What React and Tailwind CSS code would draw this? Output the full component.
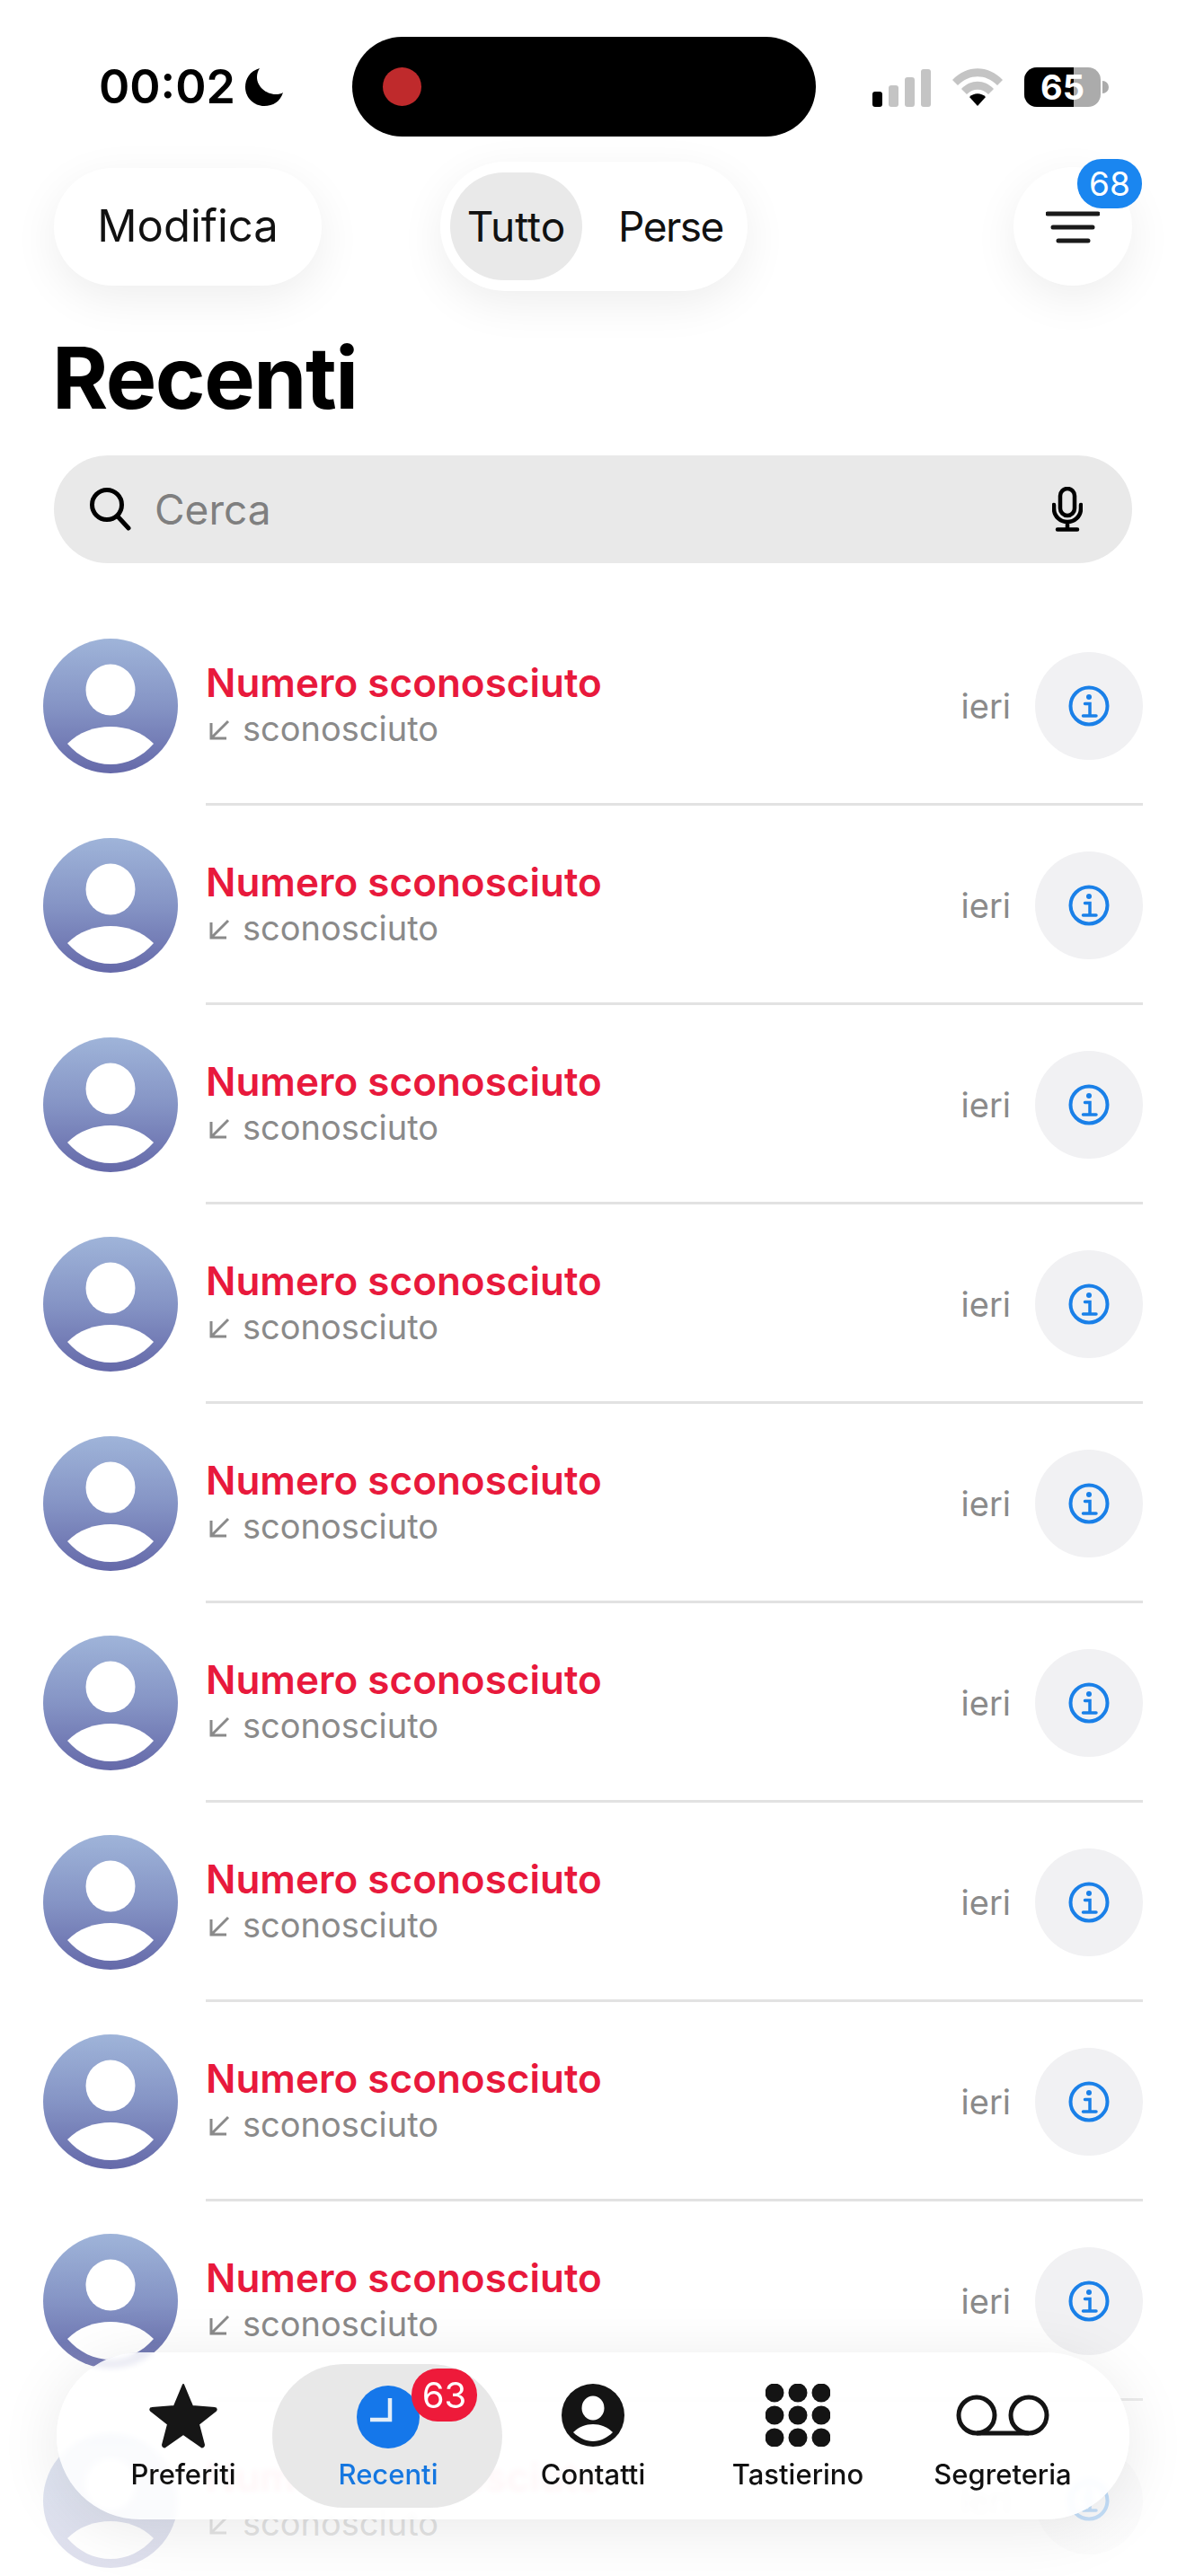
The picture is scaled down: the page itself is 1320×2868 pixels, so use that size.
import React from "react";

const ROWS = Array.from({ length: 10 }, (_, i) => i);

function Avatar({ id }) {
  return (
    <svg width="150" height="150" viewBox="0 0 150 150" className="shrink-0">
      <defs>
        <linearGradient id={`av${id}`} x1="0" y1="0" x2="0" y2="1">
          <stop offset="0" stopColor="#9fb4d9" />
          <stop offset="0.5" stopColor="#8594c5" />
          <stop offset="1" stopColor="#6569a9" />
        </linearGradient>
      </defs>
      <circle cx="75" cy="75" r="75" fill={`url(#av${id})`} />
      <ellipse cx="75" cy="57" rx="27.5" ry="28.5" fill="#ffffff" />
      <path d="M27 117 C40 104 57 98 75 98 C93 98 110 104 123 117 C110 132 93 140 75 140 C57 140 40 132 27 117 Z" fill="#ffffff" />
    </svg>
  );
}

function InfoIcon() {
  return (
    <svg width="48" height="48" viewBox="0 0 48 48" fill="none" stroke="#1a80e8">
      <circle cx="24" cy="24" r="20.5" strokeWidth="4" />
      <circle cx="24" cy="14" r="3" fill="#1a80e8" stroke="none" />
      <path d="M19.5 21.5H25V35M17.5 35H32" strokeWidth="3.5" strokeLinecap="round" />
    </svg>
  );
}

function CallRow({ id }) {
  return (
    <div className="flex h-[222px] pl-[48px] pr-[48px] items-center shrink-0">
      <Avatar id={id} />
      <div className="ml-[31px] flex-1 self-stretch flex items-center border-b-[3px] border-[#e2e2e2] pt-[3px]">
        <div className="flex-1">
          <div className="text-[44px] leading-[49px] font-semibold text-[#e8193c]">Numero sconosciuto</div>
          <div className="flex items-center mt-[2px] text-[38px] leading-[49px] text-[#8a8a8a]">
            <svg width="26" height="26" viewBox="0 0 26 26" fill="none" stroke="#8a8a8a" strokeWidth="3" className="ml-[2px] mr-[13px] mt-[2px]">
              <path d="M23 3L4 22M4 5V22H21" />
            </svg>
            sconosciuto
          </div>
        </div>
        <span className="text-[38px] text-[#8a8a8a] mr-[27px]">ieri</span>
        <div className="w-[120px] h-[120px] rounded-full bg-[#f1f1f3] flex items-center justify-center">
          <InfoIcon />
        </div>
      </div>
    </div>
  );
}

function StatusBar() {
  return (
    <div className="flex items-center h-[111px]">
      <div className="w-[392px] flex items-center pl-[110px] text-black">
        <span className="text-[52px] font-semibold leading-none">00:02</span>
        <svg width="44" height="44" viewBox="0 0 44 44" className="ml-[10px]">
          <path d="M17 1C6 4 1 13 1 22C1 34 11 43 22 43C32 43 40 38 43 28C41 29.500 38 30 35 30C24 30 14 21 14 11C14 7 15 4 17 1Z" fill="#000" />
        </svg>
      </div>
      <div className="w-[516px] h-[111px] rounded-[56px] bg-black flex items-center pl-[34px]">
        <div className="w-[43px] h-[43px] rounded-full bg-[#bf2a2c]" />
      </div>
      <div className="flex-1 flex items-center pl-[63px]">
        <svg width="66" height="42" viewBox="0 0 66 42" className="mt-[2px]">
          <rect x="0" y="25" width="11" height="17" rx="3" fill="#000" />
          <rect x="18" y="18" width="11" height="24" rx="3" fill="#c4c4c4" />
          <rect x="36" y="9" width="11" height="33" rx="3" fill="#c4c4c4" />
          <rect x="54" y="0" width="11" height="42" rx="3" fill="#c4c4c4" />
        </svg>
        <svg width="58" height="44" viewBox="0 0 58 44" className="ml-[22px]">
          <path d="M1 14C17 -3 41 -3 57 14L51 20C38 7 20 7 7 20Z" fill="#c4c4c4" />
          <path d="M11 24C21 13 37 13 47 24L41 30C34 23 24 23 17 30Z" fill="#c4c4c4" />
          <path d="M20 33C25 28 33 28 38 33L29 43Z" fill="#000" />
        </svg>
        <div className="relative w-[85px] h-[44px] ml-[23px] rounded-[14px] bg-[#ababab] flex items-center justify-center">
          <div className="absolute left-0 top-0 bottom-0 w-[55px] rounded-l-[14px] bg-black" />
          <span className="relative text-[38px] font-bold text-white leading-none">65</span>
        </div>
        <div className="w-[7px] h-[14px] rounded-r-full bg-[#ababab] ml-[2px]" />
      </div>
    </div>
  );
}

function Header() {
  return (
    <div className="flex items-center h-[144px] mt-[28px] px-[60px]">
      <div className="w-[298px] h-[131px] rounded-full bg-white shadow-[0_14px_50px_rgba(0,0,0,0.07)] flex items-center justify-center text-[49px] text-[#111]">
        Modifica
      </div>
      <div className="ml-[132px] w-[342px] h-[144px] rounded-full bg-white shadow-[0_14px_50px_rgba(0,0,0,0.07)] flex items-center pl-[11px] text-[46px] text-[#111]">
        <div className="w-[147px] h-[120px] rounded-full bg-[#e9e9e9] flex items-center justify-center">Tutto</div>
        <div className="ml-[40px] tracking-[-1.500px]">Perse</div>
      </div>
      <div className="ml-auto relative w-[132px] h-[132px] rounded-full bg-white shadow-[0_14px_50px_rgba(0,0,0,0.07)] flex items-center justify-center">
        <svg width="60" height="40" viewBox="0 0 60 40" className="mt-[2px]">
          <path d="M2 5H58M8 20H52M14 35H47" stroke="#1a1a1a" strokeWidth="5" strokeLinecap="round" />
        </svg>
        <div className="absolute left-[71px] top-[-9px] w-[72px] h-[55px] rounded-[27px] bg-[#1a86f0] text-white text-[37px] flex items-center justify-center">
          68
        </div>
      </div>
    </div>
  );
}

function SearchBar() {
  return (
    <div className="mx-[60px] mt-[28px] h-[120px] rounded-[60px] bg-[#e9e9e9] flex items-center pl-[40px] pr-[55px]">
      <svg width="46" height="48" viewBox="0 0 46 48" fill="none" stroke="#000" strokeWidth="5" strokeLinecap="round">
        <circle cx="19" cy="19" r="16.500" />
        <path d="M31 32L43 45" />
      </svg>
      <span className="ml-[26px] text-[46px] text-[#7f7f7f]">Cerca</span>
      <svg width="34" height="50" viewBox="0 0 34 50" fill="none" stroke="#000" strokeWidth="4.500" strokeLinecap="round" className="ml-auto">
        <rect x="9" y="2" width="16" height="30" rx="8" />
        <path d="M2 20V24C2 33 9 39 17 39C25 39 32 33 32 24V20M17 39V47M6 47.500H28" />
      </svg>
    </div>
  );
}

function Tab({ label, active, children }) {
  return (
    <div className="relative flex flex-col items-center">
      {active && <div className="absolute inset-y-0 -left-[15px] -right-[13px] rounded-[80px] bg-[#e6e6e6]/90" />}
      <div className="relative h-[74px] mt-[20px] flex items-center justify-center">{children}</div>
      <div className={`relative mt-[10px] text-[31px] leading-[38px] font-medium ${active ? "text-[#1577e0]" : "text-[#111]"}`}>{label}</div>
    </div>
  );
}

function TabBar() {
  return (
    <div className="absolute left-[63px] top-[2619px] w-[1194px] h-[186px] rounded-[93px] bg-white/85 backdrop-blur-[3px] shadow-[0_10px_70px_rgba(0,0,0,0.09)] grid grid-cols-5 px-[27px] py-[13px]">
      <Tab label="Preferiti">
        <svg width="78" height="74" viewBox="0 0 78 74">
          <path d="M39 3L49 27L74 29C76 29 76 31 75 32L56 47L62 70C62 72 60 73 59 72L39 58L19 72C18 73 16 72 16 70L22 47L3 32C2 31 2 29 4 29L29 27Z" fill="#161616" stroke="#161616" strokeWidth="2" strokeLinejoin="round" />
        </svg>
      </Tab>
      <Tab label="Recenti" active>
        <svg width="70" height="70" viewBox="0 0 70 70" className="mt-[3px]">
          <circle cx="35" cy="35" r="35" fill="#1577ea" />
          <path d="M37 14V38H15" fill="none" stroke="#e3edf8" strokeWidth="4.500" />
        </svg>
        <div className="absolute left-[61px] top-[-15px] w-[73px] h-[59px] rounded-[29px] bg-[#ee1a3a] text-white text-[40px] flex items-center justify-center">63</div>
      </Tab>
      <Tab label="Contatti">
        <svg width="70" height="70" viewBox="0 0 70 70">
          <circle cx="35" cy="35" r="35" fill="#141414" />
          <ellipse cx="35" cy="27" rx="12.500" ry="13.500" fill="#fff" />
          <path d="M13 54C19 48 27 45 35 45C43 45 51 48 57 54C51 60 43 64 35 64C27 64 19 60 13 54Z" fill="#fff" />
        </svg>
      </Tab>
      <Tab label="Tastierino">
        <svg width="72" height="70" viewBox="0 0 72 70" fill="#141414">
          {[10, 36, 62].map((x) =>
            [10, 35, 60].map((y) => <circle key={`${x}-${y}`} cx={x} cy={y} r="10.500" />)
          )}
        </svg>
      </Tab>
      <Tab label="Segreteria">
        <svg width="104" height="46" viewBox="0 0 104 46" fill="none" stroke="#141414" strokeWidth="5">
          <circle cx="23" cy="23" r="20" />
          <circle cx="81" cy="23" r="20" />
          <path d="M23 43H81" />
        </svg>
      </Tab>
    </div>
  );
}

export default function App() {
  return (
    <div className="relative w-[1320px] h-[2868px] overflow-hidden bg-white font-['Inter',sans-serif] pt-[41px]">
      <StatusBar />
      <Header />
      <h1 className="mx-[58px] mt-[39px] text-[95px] leading-[116px] font-bold text-black tracking-[-1.500px]">Recenti</h1>
      <SearchBar />
      <div className="mt-[48px] flex flex-col">
        {ROWS.map((i) => (
          <CallRow key={i} id={i} />
        ))}
      </div>
      {/* fade above the tab bar */}
      <div className="absolute left-0 right-0 bottom-0 h-[260px] bg-gradient-to-b from-white/0 via-white/70 to-white/80" />
      <TabBar />
    </div>
  );
}
